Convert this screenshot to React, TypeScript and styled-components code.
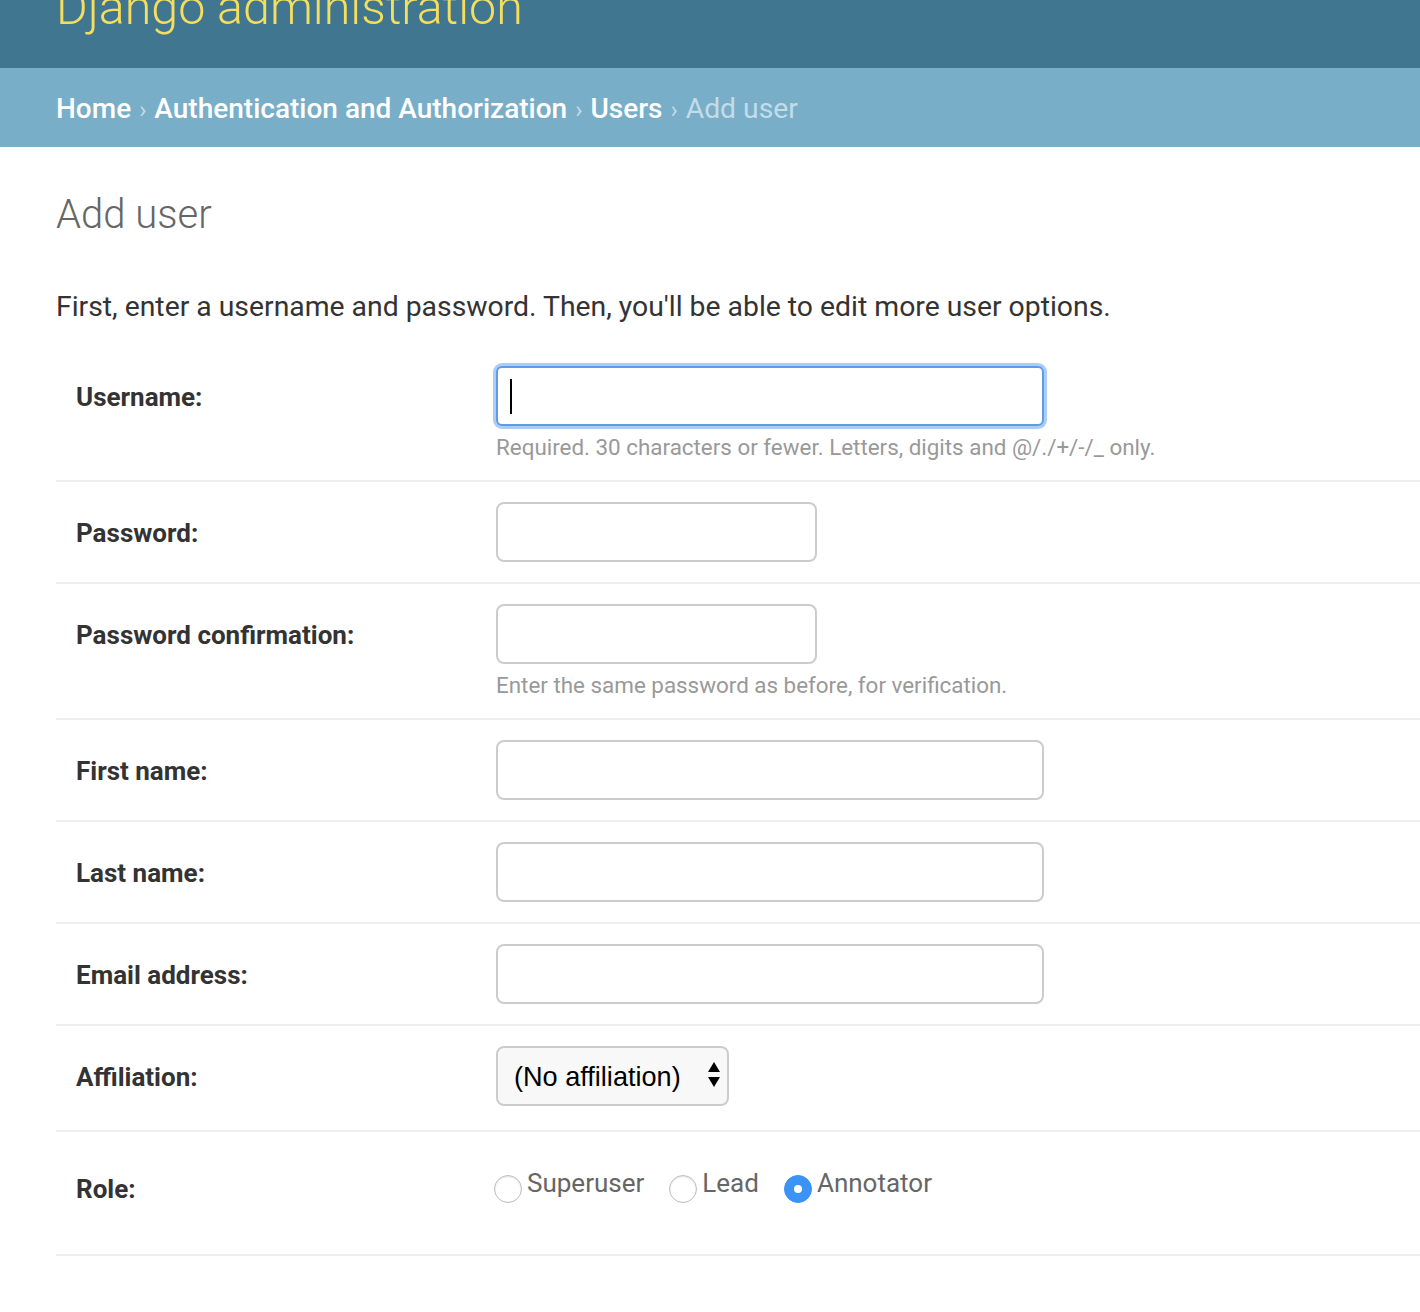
import React from "react";
import styled, { createGlobalStyle } from "styled-components";

const Global = createGlobalStyle`
  html, body { margin: 0; padding: 0; background: #fff; }
  body { font-family: Roboto, "Liberation Sans", Arial, sans-serif; color: #333; }
  * { box-sizing: border-box; }
`;

const Header = styled.header`
  height: 68px;
  background: #417690;
  padding: 0 56px;
  overflow: hidden;
`;

const Brand = styled.h1`
  margin: -20px 0 0;
  font-size: 48.4px;
  line-height: 56px;
  font-weight: 300;
  color: #f5dd5d;
`;

const Breadcrumbs = styled.nav`
  background: #79aec8;
  padding: 22px 56px 18px;
  font-size: 28px;
  line-height: 38px;
  color: #c4dce8;
  display: flex;
  align-items: baseline;
  white-space: nowrap;
`;

const Crumb = styled.a`
  color: #fff;
  text-decoration: none;
  font-weight: 500;
`;

const Sep = styled.span`
  color: #c4dce8;
  margin: 0 8px;
  font-size: 24px;
`;

const Current = styled.span`
  color: #c4dce8;
  font-size: 28.3px;
`;

const Content = styled.main`
  padding-left: 56px;
`;

const Title = styled.h1`
  margin: 44px 0 0;
  font-size: 40px;
  line-height: 48px;
  font-weight: 300;
  color: #666;
`;

const Intro = styled.p`
  margin: 50px 0 21px;
  font-size: 28.35px;
  line-height: 36px;
  color: #333;
`;

const Row = styled.div`
  display: grid;
  grid-template-columns: 440px 1fr;
  padding: 20px 0;
  border-bottom: 2px solid #eee;
`;

const Label = styled.label<{ $top?: number }>`
  padding: ${(p) => p.$top ?? 16}px 0 0 20px;
  font-size: 26px;
  line-height: 30px;
  font-weight: 700;
  color: #333;
`;

const Field = styled.div`
  display: flex;
  flex-direction: column;
  align-items: flex-start;
`;

const TextInput = styled.input<{ $w: number }>`
  width: ${(p) => p.$w}px;
  height: 60px;
  border: 2px solid #ccc;
  border-radius: 8px;
  background: #fff;
  padding: 0 14px;
  font-size: 26px;
  font-family: Roboto, sans-serif;
  outline: none;
`;

const FocusWrap = styled.div`
  position: relative;
`;

const FocusInput = styled(TextInput)`
  border-color: #5e9de6;
  box-shadow: 0 0 0 3px #a9cdf6;
  border-radius: 6px;
`;

const Caret = styled.span`
  position: absolute;
  left: 14px;
  top: 13px;
  width: 2px;
  height: 35px;
  background: #000;
`;

const Help = styled.div`
  margin-top: 8px;
  font-size: 22.4px;
  line-height: 26px;
  color: #999;
`;

const SelectWrap = styled.div`
  position: relative;
  margin-bottom: 4px;
`;

const Select = styled.select`
  appearance: none;
  -webkit-appearance: none;
  width: 233px;
  height: 60px;
  border: 2px solid #ccc;
  border-radius: 8px;
  background: #f8f8f8;
  padding: 0 40px 0 16px;
  font-family: "Liberation Sans", Arial, sans-serif;
  font-size: 27.1px;
  color: #000;
  outline: none;
`;

const Arrows = styled.svg`
  position: absolute;
  right: 9px;
  top: 16px;
  pointer-events: none;
`;

const RadioList = styled.ul`
  list-style: none;
  margin: 0 0 0 -2px;
  padding: 16px 0 0;
  display: flex;
  gap: 25px;
  height: 82px;
`;

const RadioItem = styled.li`
  display: flex;
  align-items: flex-start;
`;

const RadioLabel = styled.label`
  display: flex;
  align-items: flex-start;
  font-size: 26px;
  line-height: 30px;
  color: #666;
`;

const Radio = styled.input`
  appearance: none;
  -webkit-appearance: none;
  margin: 7px 5px 0 0;
  width: 28px;
  height: 28px;
  border-radius: 50%;
  border: 1px solid #bdbdbd;
  background: #fff;
  box-shadow: inset 0 1px 2px rgba(0, 0, 0, 0.12);
  display: grid;
  place-items: center;
  &:checked {
    background: #3b93f5;
    border-color: #3b93f5;
    box-shadow: none;
  }
  &:checked::after {
    content: "";
    width: 8px;
    height: 8px;
    border-radius: 50%;
    background: #fff;
  }
`;

export default function App() {
  return (
    <>
      <Global />
      <Header>
        <Brand>Django administration</Brand>
      </Header>
      <Breadcrumbs>
        <Crumb href="#">Home</Crumb>
        <Sep>›</Sep>
        <Crumb href="#">Authentication and Authorization</Crumb>
        <Sep>›</Sep>
        <Crumb href="#">Users</Crumb>
        <Sep>›</Sep>
        <Current>Add user</Current>
      </Breadcrumbs>
      <Content>
        <Title>Add user</Title>
        <Intro>First, enter a username and password. Then, you'll be able to edit more user options.</Intro>

        <Row>
          <Label>Username:</Label>
          <Field>
            <FocusWrap>
              <FocusInput $w={548} />
              <Caret />
            </FocusWrap>
            <Help>Required. 30 characters or fewer. Letters, digits and @/./+/-/_ only.</Help>
          </Field>
        </Row>
        <Row>
          <Label>Password:</Label>
          <Field>
            <TextInput $w={321} type="password" />
          </Field>
        </Row>
        <Row>
          <Label>Password confirmation:</Label>
          <Field>
            <TextInput $w={321} type="password" />
            <Help>Enter the same password as before, for verification.</Help>
          </Field>
        </Row>
        <Row>
          <Label>First name:</Label>
          <Field>
            <TextInput $w={548} />
          </Field>
        </Row>
        <Row>
          <Label>Last name:</Label>
          <Field>
            <TextInput $w={548} />
          </Field>
        </Row>
        <Row>
          <Label>Email address:</Label>
          <Field>
            <TextInput $w={548} />
          </Field>
        </Row>
        <Row>
          <Label>Affiliation:</Label>
          <Field>
            <SelectWrap>
              <Select defaultValue="">
                <option value="">(No affiliation)</option>
              </Select>
              <Arrows width="12" height="26" viewBox="0 0 12 26">
                <path d="M6 0 L12 10 L0 10 Z" fill="#000" />
                <path d="M0 15 L12 15 L6 25 Z" fill="#000" />
              </Arrows>
            </SelectWrap>
          </Field>
        </Row>
        <Row>
          <Label $top={22}>Role:</Label>
          <Field>
            <RadioList>
              <RadioItem>
                <RadioLabel>
                  <Radio type="radio" name="role" value="superuser" />
                  Superuser
                </RadioLabel>
              </RadioItem>
              <RadioItem>
                <RadioLabel>
                  <Radio type="radio" name="role" value="lead" />
                  Lead
                </RadioLabel>
              </RadioItem>
              <RadioItem>
                <RadioLabel>
                  <Radio type="radio" name="role" value="annotator" defaultChecked />
                  Annotator
                </RadioLabel>
              </RadioItem>
            </RadioList>
          </Field>
        </Row>
      </Content>
    </>
  );
}
